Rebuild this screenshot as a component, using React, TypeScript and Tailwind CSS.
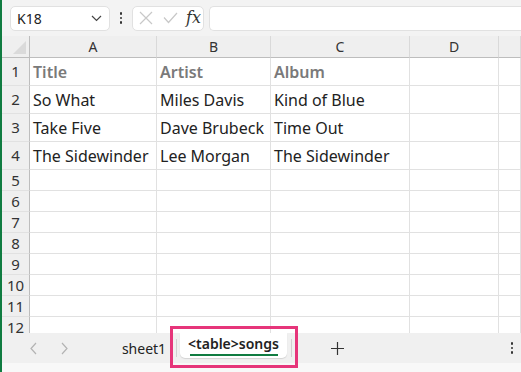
import React from "react";

const cols = ["A", "B", "C", "D", ""];
const widths = "grid-cols-[28px_127px_114px_139px_89px_1fr]";

const rows: string[][] = [
  ["Title", "Artist", "Album", "", ""],
  ["So What", "Miles Davis", "Kind of Blue", "", ""],
  ["Take Five", "Dave Brubeck", "Time Out", "", ""],
  ["The Sidewinder", "Lee Morgan", "The Sidewinder", "", ""],
];

function Dots() {
  return (
    <div className="flex flex-col items-center gap-[2px]">
      <span className="h-[2.5px] w-[2.5px] rounded-full bg-[#333]" />
      <span className="h-[2.5px] w-[2.5px] rounded-full bg-[#333]" />
      <span className="h-[2.5px] w-[2.5px] rounded-full bg-[#333]" />
    </div>
  );
}

export default function App() {
  return (
    <div
      className="flex h-[372px] w-[521px] flex-col overflow-hidden border-l-2 border-[#107c41] bg-white text-[#222]"
      style={{ fontFamily: '"Noto Sans", "Open Sans", sans-serif' }}
    >
      {/* formula bar */}
      <div className="flex h-[36px] items-center bg-[#f3f3f3] pl-[8px]">
        <div className="flex h-[25px] w-[100px] items-center justify-between rounded-[5px] border border-[#e1e1e1] bg-white pl-[6px] pr-[7px] text-[14px]">
          <span>K18</span>
          <svg width="11" height="7" viewBox="0 0 11 7" fill="none" stroke="#444" strokeWidth="1.2">
            <path d="M1 1l4.5 4.5L10 1" />
          </svg>
        </div>
        <div className="flex w-[22px] justify-center">
          <Dots />
        </div>
        <div className="flex h-[25px] w-[72px] items-center rounded-[5px] border border-[#e1e1e1] bg-white pl-[6px]">
          <svg width="14" height="14" viewBox="0 0 14 14" stroke="#c8c8c8" strokeWidth="1.2">
            <path d="M1 1l12 12M13 1L1 13" />
          </svg>
          <svg className="ml-[10px]" width="15" height="12" viewBox="0 0 15 12" fill="none" stroke="#c8c8c8" strokeWidth="1.2">
            <path d="M1 5.5l4.5 5L14 1" />
          </svg>
          <span
            className="ml-[8px] text-[16px] italic text-[#333]"
            style={{ fontFamily: '"DejaVu Serif", "Liberation Serif", serif' }}
          >
            fx
          </span>
        </div>
        <div className="ml-[5px] h-[25px] flex-1 rounded-l-[5px] border border-r-0 border-[#e1e1e1] bg-white" />
      </div>

      {/* grid */}
      <div className="flex-1 overflow-hidden">
        <div className={`grid ${widths}`}>
          <div className="relative h-[22px] border-b border-r border-[#bdbdbd] bg-[#efefef]">
            <svg className="absolute bottom-[3px] right-[3px]" width="13" height="13" viewBox="0 0 13 13">
              <path d="M13 0V13H0Z" fill="#dadada" />
            </svg>
          </div>
          {cols.map((c, i) => (
            <div
              key={i}
              className="flex h-[22px] items-center justify-center border-b border-r border-b-[#bdbdbd] border-r-[#d9d9d9] bg-[#efefef] text-[14px] text-[#333]"
            >
              {c}
            </div>
          ))}
          {rows.map((r, ri) => (
            <React.Fragment key={ri}>
              <div className="flex h-[28px] items-center justify-center border-b border-r border-b-[#e1e1e1] border-r-[#bdbdbd] bg-[#efefef] text-[15px] text-[#333]">
                {ri + 1}
              </div>
              {r.map((v, ci) => (
                <div
                  key={ci}
                  className={`flex h-[28px] items-center overflow-hidden whitespace-nowrap border-b border-r border-[#e1e1e1] pl-[3px] text-[16px] ${
                    ri === 0 ? "font-semibold text-[#7a7a7a]" : "text-[#222]"
                  }`}
                >
                  {v}
                </div>
              ))}
            </React.Fragment>
          ))}
          {[5, 6, 7, 8, 9, 10, 11, 12].map((n) => (
            <React.Fragment key={n}>
              <div className="flex h-[21px] items-center justify-center border-b border-r border-b-[#e1e1e1] border-r-[#bdbdbd] bg-[#efefef] text-[15px] text-[#333]">
                {n}
              </div>
              {cols.map((_, ci) => (
                <div key={ci} className="h-[21px] border-b border-r border-[#e1e1e1]" />
              ))}
            </React.Fragment>
          ))}
        </div>
      </div>

      {/* sheet tabs */}
      <div className="flex h-[30px] shrink-0 items-stretch bg-[#f0f0f0]">
        <div className="flex w-[110px] items-center gap-[22px] pl-[27px]">
          <svg width="9" height="13" viewBox="0 0 9 13" fill="none" stroke="#b3b3b3" strokeWidth="1.2">
            <path d="M7 1L2 6.5 7 12" />
          </svg>
          <svg width="9" height="13" viewBox="0 0 9 13" fill="none" stroke="#b3b3b3" strokeWidth="1.2">
            <path d="M2 1l5 5.5L2 12" />
          </svg>
        </div>
        <div className="flex w-[64px] items-center justify-center text-[14px] text-[#222]">
          sheet1
        </div>
        <div className="relative flex items-stretch">
          <div className="my-[6px] w-px bg-[#d0d0d0]" />
          <div className="ml-[3px] flex h-[25px] w-[107px] flex-col items-center justify-center rounded-b-[5px] bg-white shadow-[0_1px_1px_rgba(0,0,0,0.12)]">
            <span className="text-[14px] font-semibold leading-[16px] text-[#222]">&lt;table&gt;songs</span>
            <span className="mt-[2px] h-[2px] w-[88px] bg-[#107c41]" />
          </div>
          <div className="my-[6px] ml-[4px] w-px bg-[#d0d0d0]" />
          <div className="pointer-events-none absolute -left-[6px] -right-[6px] -top-[7px] bottom-[-5px] border-[3px] border-[#e6357a]" />
        </div>
        <div className="flex w-[90px] items-center justify-center">
          <svg width="13" height="13" viewBox="0 0 13 13" stroke="#333" strokeWidth="1.2">
            <path d="M6.5 0v13M0 6.5h13" />
          </svg>
        </div>
        <div className="flex-1" />
        <div className="flex w-[18px] items-center justify-center">
          <Dots />
        </div>
      </div>
      <div className="h-[9px] shrink-0 bg-[#f8f8f8]" />
    </div>
  );
}
